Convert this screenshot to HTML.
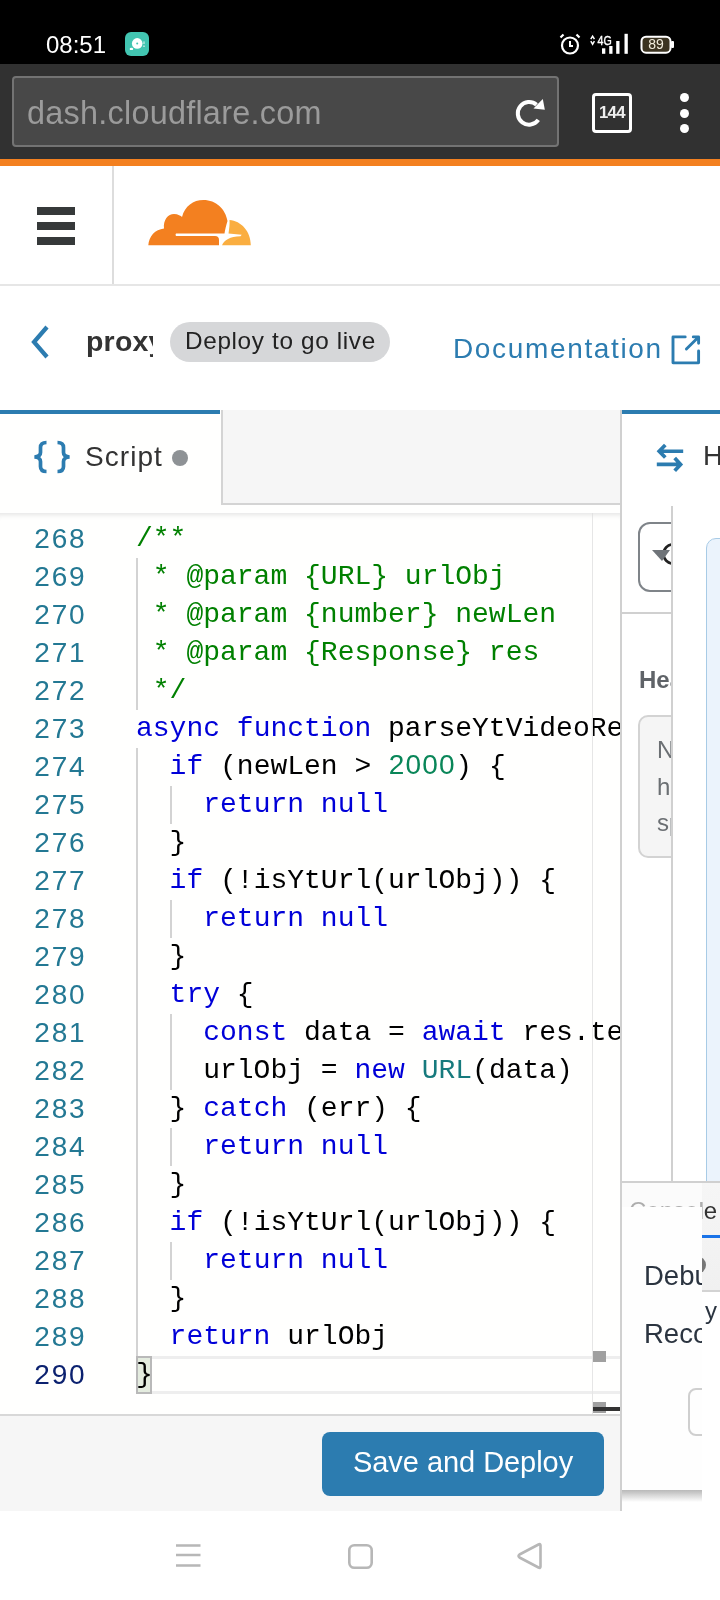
<!DOCTYPE html>
<html><head><meta charset="utf-8">
<style>
*{margin:0;padding:0;box-sizing:border-box}
html,body{width:720px;height:1600px;overflow:hidden;background:#fff;font-family:"Liberation Sans",sans-serif}
.a,.ln,.cl{will-change:transform}
.a{position:absolute}
.mono{font-family:"Liberation Mono",monospace}
#status{left:0;top:0;width:720px;height:64px;background:#000}
#toolbar{left:0;top:64px;width:720px;height:95px;background:#313131}
#url{left:12px;top:76px;width:547px;height:71px;background:#484848;border:2px solid #737373;border-radius:4px}
#orange{left:0;top:159px;width:720px;height:7px;background:#f38020}
.ln{position:absolute;left:0;margin-top:-0.5px;width:86.2px;text-align:right;color:#237893;font-size:28px;font-family:"Liberation Sans",sans-serif!important;letter-spacing:1.7px;line-height:38px;white-space:pre}
.cl{position:absolute;left:136px;font-size:28px;line-height:38px;white-space:pre;color:#000}
.c{color:#008000}.k{color:#0000d8}.n{color:#098658}.t{color:#167a7d}
.g{position:absolute;width:2px;background:#d3d3d3}
.bm{background:rgba(0,100,0,0.1);outline:2px solid #b9b9b9;outline-offset:-2px}
</style></head><body>
<div id="status" class="a"></div>
<div class="a" style="left:46px;top:30px;font-size:24px;color:#fff;line-height:30px">08:51</div>
<div id="toolbar" class="a"></div>
<div id="url" class="a"></div>
<div class="a" style="left:27px;top:94px;font-size:32.4px;color:#9b9b9b;line-height:38px;letter-spacing:0.25px">dash.cloudflare.com</div>
<div id="orange" class="a"></div>
<!-- status icons -->
<svg class="a" style="left:125px;top:32px" width="24" height="24" viewBox="0 0 24 24">
<rect x="0" y="0" width="24" height="24" rx="6" fill="#42c5b1"/>
<circle cx="12.2" cy="11.4" r="5.3" fill="#fff"/>
<circle cx="12.2" cy="11.4" r="1" fill="#42c5b1"/>
<ellipse cx="6.4" cy="16.9" rx="1.8" ry="1.2" fill="#fff"/>
<rect x="18.4" y="9.4" width="1.2" height="2.6" fill="#cfeee9"/><rect x="18.1" y="13.6" width="1.8" height="1.2" fill="#cfeee9"/>
</svg>
<svg class="a" style="left:558px;top:32px" width="24" height="24" viewBox="0 0 24 24">
<circle cx="12" cy="13.5" r="8" fill="none" stroke="#fff" stroke-width="2.2"/>
<path d="M12 9v5h3" fill="none" stroke="#fff" stroke-width="2"/>
<path d="M2.5 5.5l3-3M21.5 5.5l-3-3" stroke="#fff" stroke-width="2.2"/>
</svg>
<svg class="a" style="left:589px;top:33px" width="40" height="22" viewBox="0 0 40 22">
<path d="M1.8 6.2L3.6 3.2L5.4 6.2M1.8 8.2L3.6 11.2L5.4 8.2" fill="none" stroke="#fff" stroke-width="1.5"/>
<text x="8.5" y="12.4" font-family="Liberation Sans" font-size="13.3" fill="#fff" stroke="#fff" stroke-width="0.4" transform="scale(0.8 1)" style="transform-origin:8.5px 0">4G</text>
<rect x="13" y="15.3" width="3.3" height="5.5" fill="#fff"/>
<rect x="20.2" y="13" width="3.3" height="7.8" fill="#fff"/>
<rect x="27.2" y="8" width="3.3" height="12.8" fill="#fff"/>
<rect x="35.5" y="0.8" width="3.3" height="20" fill="#fff"/>
</svg>
<svg class="a" style="left:639px;top:34px" width="36" height="20" viewBox="0 0 36 20">
<rect x="2.5" y="2.7" width="29" height="16" rx="4.5" fill="#3b3320" stroke="#fff" stroke-width="2"/>
<rect x="32" y="7" width="3" height="7" rx="1" fill="#fff"/>
<text x="17" y="15" text-anchor="middle" font-family="Liberation Sans" font-size="14" fill="#f2eede">89</text>
</svg>
<!-- toolbar icons -->
<svg class="a" style="left:505px;top:90px" width="50" height="45" viewBox="0 0 50 45">
<path d="M33.3 29.9A11.3 11.3 0 1 1 31.5 14.8" fill="none" stroke="#fff" stroke-width="4"/>
<path d="M37.8 9L39.8 19.8L28.5 18.6Z" fill="#fff"/>
</svg>
<div class="a" style="left:592px;top:93px;width:40px;height:40px;border:3.4px solid #fff;border-radius:4px"></div>
<div class="a" style="left:592px;top:100.5px;width:40px;text-align:center;font-size:16.8px;font-weight:700;color:#eee;line-height:24px;letter-spacing:-0.6px">144</div>
<div class="a" style="left:680px;top:93px;width:9px;height:9px;border-radius:50%;background:#fff"></div>
<div class="a" style="left:680px;top:108.5px;width:9px;height:9px;border-radius:50%;background:#fff"></div>
<div class="a" style="left:680px;top:124px;width:9px;height:9px;border-radius:50%;background:#fff"></div>


<!-- header -->
<div class="a" style="left:112px;top:166px;width:2px;height:119px;background:#ddd"></div>
<div class="a" style="left:0;top:284px;width:720px;height:2px;background:#e6e6e6"></div>
<div class="a" style="left:37px;top:207px;width:38px;height:8px;background:#36393a"></div>
<div class="a" style="left:37px;top:222px;width:38px;height:8px;background:#36393a"></div>
<div class="a" style="left:37px;top:237px;width:38px;height:8px;background:#36393a"></div>


<svg class="a" style="left:140px;top:190px" width="120" height="60" viewBox="0 0 120 60">
<path d="M8.3 55.3C9 46 15 39.5 24 38.5C23 30 28 24 34 24C38 24 41 26 42 27C45 16 53 10 63.5 10C76 10 85.5 19 87.5 31C86 36 85 40 84.5 43.5L36 43.5Q35 44.7 36 46L75 46Q79 46 79 50L79 55.3Z" fill="#f38020"/>
<path d="M89.5 30C101 31 110.8 41 110.8 55.3L82 55.3C84 50 90 46.5 100.5 46.2L101.7 44.8L88.5 43.5C89.3 38 89.8 34 89.5 30Z" fill="#faae40"/>
</svg>
<svg class="a" style="left:28px;top:324px" width="24" height="36" viewBox="0 0 24 36">
<path d="M19 3L6 18L19 33" fill="none" stroke="#2c7cb0" stroke-width="4.2"/>
</svg>
<div class="a" style="left:85.5px;top:322px;width:66.5px;height:42px;overflow:hidden"><div style="font-size:28.5px;font-weight:700;color:#333;line-height:38px;letter-spacing:0.2px">proxy-worker</div></div>
<svg class="a" style="left:670px;top:333px" width="33" height="33" viewBox="0 0 33 33">
<path d="M15.2 3.9H3V29.85H28.6V18M23.3 3.9H28.6V10.2M16.4 16L27.8 4.7" fill="none" stroke="#2c7cb0" stroke-width="2.9" stroke-linecap="round" stroke-linejoin="round"/>
</svg>

<!-- breadcrumb -->
<div class="a" style="left:170px;top:322px;width:220px;height:40px;border-radius:20px;background:#d6d7d9"></div>
<div class="a" style="left:185px;top:326px;font-size:24.3px;letter-spacing:0.66px;color:#222;line-height:30px">Deploy to go live</div>
<div class="a" style="left:453px;top:333px;font-size:28px;letter-spacing:1.65px;color:#2c7cb0;line-height:32px">Documentation</div>

<!-- left panel -->
<div class="a" style="left:0;top:410px;width:620px;height:1101px;background:#fffffe"></div>
<div class="a" style="left:221px;top:410px;width:399px;height:95px;background:#f6f6f6;border-left:2px solid #d4d4d4;border-bottom:2px solid #d4d4d4"></div>
<div class="a" style="left:0;top:410px;width:220px;height:4px;background:#2c7cb0"></div>

<svg class="a" style="left:30px;top:438px" width="44" height="38" viewBox="0 0 44 38">
<path d="M16.5 4.5Q10.5 4.5 10.5 9.5V14.5Q10.5 18.5 4.5 19Q10.5 19.5 10.5 23.5V28.5Q10.5 33.5 16.5 33.5" fill="none" stroke="#2c7cb0" stroke-width="3.7"/>
<path d="M27.5 4.5Q33.5 4.5 33.5 9.5V14.5Q33.5 18.5 39.5 19Q33.5 19.5 33.5 23.5V28.5Q33.5 33.5 27.5 33.5" fill="none" stroke="#2c7cb0" stroke-width="3.7"/>
</svg>
<div class="a" style="left:85px;top:440px;font-size:28px;color:#333;line-height:34px;letter-spacing:1.05px">Script</div>
<div class="a" style="left:172px;top:450px;width:16px;height:16px;border-radius:50%;background:#8e9295"></div>
<div class="a" style="left:0;top:1414px;width:620px;height:97px;background:#f6f6f6;border-top:2px solid #d8d8d8"></div>
<div class="a" style="left:322px;top:1432px;width:282px;height:64px;border-radius:8px;background:#2c7cb0"></div>
<div class="a" style="left:353px;top:1445px;font-size:29px;color:#fff;line-height:34px;letter-spacing:-0.05px">Save and Deploy</div>
<div class="a" style="left:620px;top:410px;width:2px;height:1101px;background:#d0d0d0"></div>

<!-- editor -->
<div class="a" style="left:0;top:513px;width:620px;height:901px;overflow:hidden">
<div class="a" style="left:0;top:0;width:620px;height:10px;box-shadow:inset 0 7px 6px -6px #ddd;z-index:5"></div>
<div class="a" style="left:137px;top:843px;width:483px;height:38px;border-top:3px solid #eee;border-bottom:3px solid #eee"></div>
<div class="a" style="left:136px;top:843px;width:16px;height:38px;background:#e4ecdf;border:2px solid #b9b9b9"></div>
<div class="ln mono" style="top:7px;color:#237893">268</div>
<div class="cl mono" style="top:7px"><span class="c">/**</span></div>
<div class="ln mono" style="top:45px;color:#237893">269</div>
<div class="cl mono" style="top:45px"><span class="c"> * @param {URL} urlObj</span></div>
<div class="ln mono" style="top:83px;color:#237893">270</div>
<div class="cl mono" style="top:83px"><span class="c"> * @param {number} newLen</span></div>
<div class="ln mono" style="top:121px;color:#237893">271</div>
<div class="cl mono" style="top:121px"><span class="c"> * @param {Response} res</span></div>
<div class="ln mono" style="top:159px;color:#237893">272</div>
<div class="cl mono" style="top:159px"><span class="c"> */</span></div>
<div class="ln mono" style="top:197px;color:#237893">273</div>
<div class="cl mono" style="top:197px"><span class="k">async</span> <span class="k">function</span> parseYtVideoRedirect(urlObj, newLen, res) {</div>
<div class="ln mono" style="top:235px;color:#237893">274</div>
<div class="cl mono" style="top:235px">  <span class="k">if</span> (newLen &gt; <span class="n" style="font-family:'Liberation Sans';line-height:0;letter-spacing:1.23px;padding-left:0.6px;margin-right:-0.6px">2000</span>) {</div>
<div class="ln mono" style="top:273px;color:#237893">275</div>
<div class="cl mono" style="top:273px">    <span class="k">return</span> <span class="k">null</span></div>
<div class="ln mono" style="top:311px;color:#237893">276</div>
<div class="cl mono" style="top:311px">  }</div>
<div class="ln mono" style="top:349px;color:#237893">277</div>
<div class="cl mono" style="top:349px">  <span class="k">if</span> (!isYtUrl(urlObj)) {</div>
<div class="ln mono" style="top:387px;color:#237893">278</div>
<div class="cl mono" style="top:387px">    <span class="k">return</span> <span class="k">null</span></div>
<div class="ln mono" style="top:425px;color:#237893">279</div>
<div class="cl mono" style="top:425px">  }</div>
<div class="ln mono" style="top:463px;color:#237893">280</div>
<div class="cl mono" style="top:463px">  <span class="k">try</span> {</div>
<div class="ln mono" style="top:501px;color:#237893">281</div>
<div class="cl mono" style="top:501px">    <span class="k">const</span> data = <span class="k">await</span> res.text()</div>
<div class="ln mono" style="top:539px;color:#237893">282</div>
<div class="cl mono" style="top:539px">    urlObj = <span class="k">new</span> <span class="t">URL</span>(data)</div>
<div class="ln mono" style="top:577px;color:#237893">283</div>
<div class="cl mono" style="top:577px">  } <span class="k">catch</span> (err) {</div>
<div class="ln mono" style="top:615px;color:#237893">284</div>
<div class="cl mono" style="top:615px">    <span class="k">return</span> <span class="k">null</span></div>
<div class="ln mono" style="top:653px;color:#237893">285</div>
<div class="cl mono" style="top:653px">  }</div>
<div class="ln mono" style="top:691px;color:#237893">286</div>
<div class="cl mono" style="top:691px">  <span class="k">if</span> (!isYtUrl(urlObj)) {</div>
<div class="ln mono" style="top:729px;color:#237893">287</div>
<div class="cl mono" style="top:729px">    <span class="k">return</span> <span class="k">null</span></div>
<div class="ln mono" style="top:767px;color:#237893">288</div>
<div class="cl mono" style="top:767px">  }</div>
<div class="ln mono" style="top:805px;color:#237893">289</div>
<div class="cl mono" style="top:805px">  <span class="k">return</span> urlObj</div>
<div class="ln mono" style="top:843px;color:#0b216f">290</div>
<div class="cl mono" style="top:843px">}</div>
<div class="g" style="left:136px;top:45px;height:152px"></div>
<div class="g" style="left:136px;top:235px;height:608px"></div>
<div class="g" style="left:170px;top:273px;height:38px"></div>
<div class="g" style="left:170px;top:387px;height:38px"></div>
<div class="g" style="left:170px;top:501px;height:76px"></div>
<div class="g" style="left:170px;top:615px;height:38px"></div>
<div class="g" style="left:170px;top:729px;height:38px"></div>
<div class="a" style="left:592px;top:0;width:1px;height:901px;background:#e6e6e6"></div>
<div class="a" style="left:593px;top:838px;width:13px;height:11px;background:#a0a0a0"></div>
<div class="a" style="left:593px;top:889px;width:13px;height:11px;background:#a0a0a0"></div>
<div class="a" style="left:593px;top:894px;width:27px;height:4px;background:#333"></div>
</div>

<!-- right panel -->
<div class="a" style="left:622px;top:410px;width:98px;height:4px;background:#2c7cb0"></div>
<svg class="a" style="left:620px;top:420px" width="100" height="80" viewBox="0 0 100 80">
<path d="M45.3 25L39.2 31.25L45.3 37.5M39.2 31.25H63.2M54.7 38L60.6 44.4L54.7 50.8M60.6 44.4H36.8" fill="none" stroke="#2c7cb0" stroke-width="3.7" stroke-linecap="butt" stroke-linejoin="miter"/>
</svg>
<div class="a" style="left:703px;top:439px;font-size:27.5px;color:#333;line-height:34px">H</div>
<div class="a" style="left:671px;top:506px;width:2px;height:675px;background:#d0d0d0"></div>
<div class="a" style="left:622px;top:506px;width:49px;height:675px;overflow:hidden">
  <div class="a" style="left:16px;top:16px;width:60px;height:70px;border:2px solid #7f8489;border-radius:12px;background:#fff"></div>
  <svg class="a" style="left:0;top:0" width="49" height="100" viewBox="0 0 49 100">
    <circle cx="51" cy="48" r="9.5" fill="none" stroke="#222" stroke-width="2.6"/>
    <path d="M30 44H48L40 55Z" fill="#6f7479"/>
  </svg>
  <div class="a" style="left:0;top:106px;width:49px;height:2px;background:#d0d0d0"></div>
  <div class="a" style="left:17px;top:159px;font-size:24px;font-weight:700;color:#5f6368;line-height:30px;white-space:nowrap">Headers</div>
  <div class="a" style="left:16px;top:209px;width:60px;height:143px;border:2px solid #d3d3d3;border-radius:10px;background:#f5f5f5"></div>
  <div class="a" style="left:35px;top:226px;font-size:24px;color:#6b6f73;line-height:36.5px;white-space:nowrap">No<br>ho<br>sp</div>
</div>
<div class="a" style="left:706px;top:538px;width:30px;height:660px;border:1.5px solid #a8cbe6;border-radius:10px;background:#ebf3fc"></div>
<div class="a" style="left:673px;top:506px;width:33px;height:675px;background:#fff"></div>
<div class="a" style="left:622px;top:1181px;width:98px;height:2px;background:#d0d0d0"></div>
<div class="a" style="left:622px;top:1183px;width:98px;height:107px;background:linear-gradient(#f6f6f6,#f0f0f0)"></div>
<div class="a" style="left:622px;top:1290px;width:98px;height:221px;background:#fff"></div>
<div class="a" style="left:622px;top:1290px;width:98px;height:2px;background:#d3d3d3"></div>
<div class="a" style="left:629px;top:1196px;font-size:24px;color:#333;line-height:30px;white-space:nowrap">Console</div>
<div class="a" style="left:622px;top:1183px;width:80px;height:24px;background:rgba(255,255,255,0.6)"></div>
<div class="a" style="left:702px;top:1235px;width:18px;height:3px;background:#1a73e8"></div>
<div class="a" style="left:688px;top:1256px;width:18px;height:18px;border-radius:50%;background:#777"></div>
<div class="a" style="left:705px;top:1296px;font-size:24px;color:#2b3440;line-height:30px;white-space:nowrap">y</div>
<div class="a" style="left:622px;top:1207px;width:80px;height:283px;background:#fefefe;overflow:hidden">
  <div class="a" style="left:22px;top:52px;font-size:27.5px;color:#2b3440;line-height:34px;white-space:nowrap">Debug</div>
  <div class="a" style="left:22px;top:110px;font-size:27.5px;color:#2b3440;line-height:34px;white-space:nowrap">Recorder</div>
  <div class="a" style="left:66px;top:181px;width:40px;height:48px;border:2px solid #cfcfcf;border-radius:8px"></div>
</div>
<div class="a" style="left:622px;top:1490px;width:80px;height:12px;background:linear-gradient(#b8b8b8,rgba(255,255,255,0))"></div>
<div class="a" style="left:620px;top:410px;width:2px;height:1101px;background:#d0d0d0"></div>

<!-- nav bar -->
<div class="a" style="left:0;top:1511px;width:720px;height:89px;background:#fff"></div>
<svg class="a" style="left:170px;top:1538px" width="380" height="36" viewBox="0 0 380 36">
<path d="M6 7.5H30.5M6 17H30.5M6 27.5H30.5" stroke="#b7b7b7" stroke-width="2.6"/>
<rect x="179.3" y="7.3" width="22.4" height="22.4" rx="5" fill="none" stroke="#b7b7b7" stroke-width="2.6"/>
<path d="M370.5 7.5V28.5Q370.5 30.5 368.5 29.5L349.5 19.5Q347.5 18 349.5 16.5L368.5 6.5Q370.5 5.5 370.5 7.5Z" fill="none" stroke="#b7b7b7" stroke-width="2.6" stroke-linejoin="round"/>
</svg>
</body></html>
